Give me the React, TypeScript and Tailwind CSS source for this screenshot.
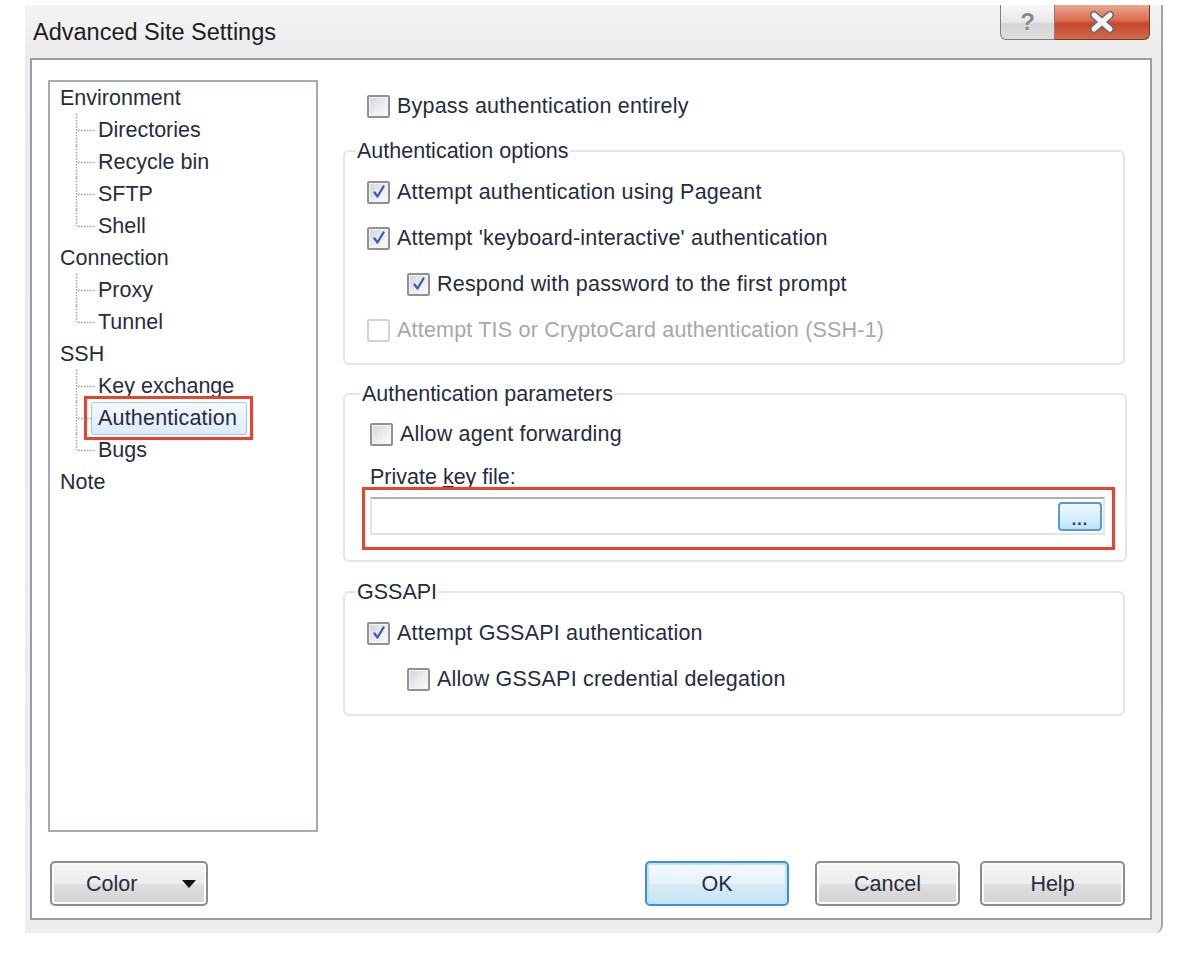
import clsx from 'clsx'
import type { ReactNode } from 'react'

const ink = 'text-[#262c3e]'

type TreeNode = { label: string; children: string[] }

const tree: TreeNode[] = [
  { label: 'Environment', children: ['Directories', 'Recycle bin', 'SFTP', 'Shell'] },
  { label: 'Connection', children: ['Proxy', 'Tunnel'] },
  { label: 'SSH', children: ['Key exchange', 'Authentication', 'Bugs'] },
  { label: 'Note', children: [] },
]

const selected = 'Authentication'

function CheckBox({ checked = false, disabled = false }: { checked?: boolean; disabled?: boolean }) {
  return (
    <span
      className={clsx(
        'flex h-[23px] w-[23px] shrink-0 items-center justify-center rounded-[2px] border-2',
        disabled
          ? 'border-[#d2d2d2] bg-white'
          : 'border-[#8f9196] bg-gradient-to-br from-[#d2d4d9] via-[#eaebee] to-[#fbfbfb] shadow-[inset_0_0_0_1px_#f4f4f4]',
      )}
    >
      {checked && (
        <svg width="16" height="16" viewBox="0 0 16 16" fill="none">
          <path d="M3.5 8.5L6.5 12.5L12.5 2.5" stroke="#3a5fb0" strokeWidth="2.3" strokeLinecap="round" strokeLinejoin="round" />
        </svg>
      )}
    </span>
  )
}

function Option({ label, checked, disabled, indent }: { label: string; checked?: boolean; disabled?: boolean; indent?: boolean }) {
  return (
    <div className={clsx('flex h-[24px] items-center gap-[7px]', indent && 'pl-[40px]')}>
      <CheckBox checked={checked} disabled={disabled} />
      <span className={clsx('tracking-[0.2px]', disabled ? 'text-[#a5a7ad]' : ink)}>{label}</span>
    </div>
  )
}

function Group({ title, titleClass, className, children }: { title: string; titleClass: string; className: string; children: ReactNode }) {
  return (
    <div className={clsx('relative rounded-[6px] border-2 border-[#e2e5ec]', className)}>
      <span className={clsx('absolute -top-[13px] bg-white px-[1px] leading-[24px]', ink, titleClass)}>{title}</span>
      {children}
    </div>
  )
}

function Connector({ last }: { last: boolean }) {
  return (
    <svg width="22" height="32" className="shrink-0">
      <line x1="2.5" y1="0" x2="2.5" y2={last ? 16 : 32} stroke="#9c9ea4" strokeWidth="1.5" strokeDasharray="1.5 1.5" />
      <line x1="4" y1="16.5" x2="21" y2="16.5" stroke="#9c9ea4" strokeWidth="1.5" strokeDasharray="1.5 1.5" />
    </svg>
  )
}

function Tree() {
  return (
    <div className="h-[752px] w-[270px] shrink-0 border-2 border-[#a6aab4] bg-white">
      {tree.map((node) => (
        <div key={node.label}>
          <div className={clsx('flex h-[32px] items-center pl-[10px]', ink)}>{node.label}</div>
          {node.children.map((child, i) => (
            <div key={child} className="flex h-[32px] items-center pl-[24px]">
              <Connector last={i === node.children.length - 1} />
              {child === selected ? (
                <span className={clsx('relative -ml-[5px] flex h-[33px] items-center rounded-[3px] border border-[#9cc7ee] bg-gradient-to-b from-[#f4f9fe] to-[#dcebfb] pr-[9px] pl-[6px] tracking-[0.2px]', ink)}>
                  {child}
                  <span className="absolute -top-[7px] -right-[7px] -bottom-[6px] -left-[8px] border-[3px] border-[#e8432c]" />
                </span>
              ) : (
                <span className={clsx('ml-[2px]', ink)}>{child}</span>
              )}
            </div>
          ))}
        </div>
      ))}
    </div>
  )
}

function WinButton({ children, primary, className }: { children: ReactNode; primary?: boolean; className?: string }) {
  return (
    <button
      className={clsx(
        'flex h-[45px] items-center rounded-[5px] border-2',
        primary
          ? 'border-[#3d8fd6] bg-[linear-gradient(#f2f9fd,#e6f3fb_50%,#d6ebf7_50%,#cbe4f3)] shadow-[inset_0_0_0_2px_#bfe3f8]'
          : 'border-[#8b8d91] bg-[linear-gradient(#f4f4f4,#ececec_50%,#dfdfdf_50%,#d3d3d3)] shadow-[inset_0_0_0_2px_#fbfbfb]',
        ink,
        className,
      )}
    >
      {children}
    </button>
  )
}

function TitleBar() {
  return (
    <div className="flex h-[53px] shrink-0">
      <div className="flex h-full items-center pl-[8px] text-[23.5px] text-[#1c1c1e]">Advanced Site Settings</div>
      <div className="mr-[11px] ml-auto flex">
        <div className="flex h-[35px] w-[55px] items-center justify-center rounded-bl-[6px] border border-t-0 border-[#7d7f84] bg-[linear-gradient(#f8f8f8,#e8e8e8_50%,#d6d6d6_55%,#dedede)] text-[24px] font-bold text-[#8a8a8a] [text-shadow:0_0_2px_#fff]">
          ?
        </div>
        <div className="flex h-[35px] w-[95px] items-center justify-center rounded-br-[6px] border border-t-0 border-l-0 border-[#6d3b2e] bg-[linear-gradient(#eaa892,#da6d52_45%,#c5462b_55%,#d36a4e)]">
          <svg width="28" height="22" viewBox="0 0 28 22">
            <path d="M6 4L22 18M22 4L6 18" stroke="#6a6a6a" strokeWidth="8" strokeLinecap="round" />
            <path d="M6 4L22 18M22 4L6 18" stroke="#f4f4f4" strokeWidth="5" strokeLinecap="round" />
          </svg>
        </div>
      </div>
    </div>
  )
}

export default function App() {
  return (
    <div className="h-[970px] w-[1192px] bg-white pt-[5px] pl-[25px] text-[21.5px] leading-[24px] [font-family:'Liberation_Sans',Arial,sans-serif]">
      <div className="flex h-[928px] w-[1138px] flex-col rounded-br-[8px] border-r-2 border-[#a2a4a8] bg-[linear-gradient(#f3f3f3,#ececec_6%,#eeeeee)]">
        <TitleBar />
        <div className="ml-[5px] flex h-[862px] w-[1122px] flex-col border-2 border-[#9b9da1] bg-white pt-[20px] pl-[16px]">
          <div className="flex">
            <Tree />
            <div className="ml-[25px] flex flex-col">
              <div className="mt-[14px] pl-[24px]">
                <Option label="Bypass authentication entirely" />
              </div>

              <Group title="Authentication options" titleClass="left-[11px]" className="mt-[32px] flex h-[215px] w-[782px] flex-col gap-[22px] pt-[28px] pl-[22px]">
                <Option label="Attempt authentication using Pageant" checked />
                <Option label="Attempt 'keyboard-interactive' authentication" checked />
                <Option label="Respond with password to the first prompt" checked indent />
                <Option label="Attempt TIS or CryptoCard authentication (SSH-1)" disabled />
              </Group>

              <Group title="Authentication parameters" titleClass="left-[16px]" className="mt-[28px] flex h-[169px] w-[784px] flex-col pt-[27px] pr-[20px] pl-[25px]">
                <Option label="Allow agent forwarding" />
                <div className={clsx('mt-[19px]', ink)}>
                  Private <span className="underline">k</span>ey file:
                </div>
                <div className="relative mt-[8px] flex h-[38px] items-center justify-end border-2 border-[#e1e5eb] border-t-[#abafb8] pr-[1px]">
                  <div className="flex h-[29px] w-[44px] items-end justify-center rounded-[4px] border-2 border-[#5b98cf] bg-[linear-gradient(#eef8fe,#d8effc_50%,#bfe4fb)] pb-[2px] text-[16px] leading-[14px] font-bold tracking-[1px] text-[#2b3550]">
                    ...
                  </div>
                  <span className="absolute -top-[12px] -right-[12px] -bottom-[17px] -left-[10px] border-[3px] border-[#e8432c]" />
                </div>
              </Group>

              <Group title="GSSAPI" titleClass="left-[11px]" className="mt-[29px] flex h-[125px] w-[782px] flex-col gap-[22px] pt-[28px] pl-[22px]">
                <Option label="Attempt GSSAPI authentication" checked />
                <Option label="Allow GSSAPI credential delegation" indent />
              </Group>
            </div>
          </div>

          <div className="mt-[29px] flex items-center pr-[25px] pl-[2px]">
            <WinButton className="w-[158px] justify-between pr-[9px] pl-[34px]">
              <span>Color</span>
              <svg width="16" height="10" viewBox="0 0 16 10">
                <path d="M1 1H15L8 9Z" fill="#111" />
              </svg>
            </WinButton>
            <WinButton primary className="ml-auto w-[144px] justify-center">
              OK
            </WinButton>
            <WinButton className="ml-[26px] w-[145px] justify-center">Cancel</WinButton>
            <WinButton className="ml-[20px] w-[145px] justify-center">Help</WinButton>
          </div>
        </div>
      </div>
    </div>
  )
}
